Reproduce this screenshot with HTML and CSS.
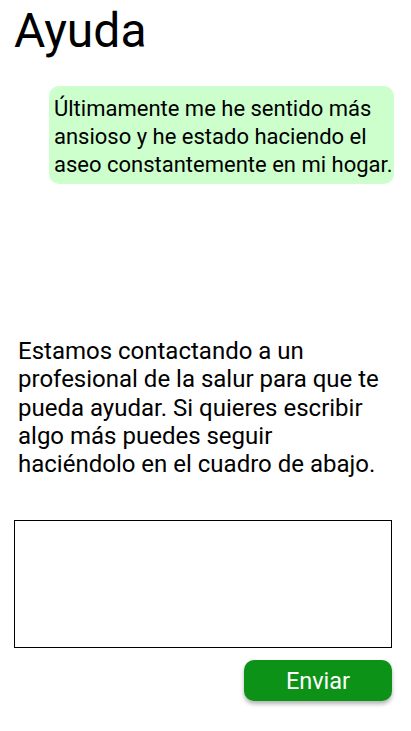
FILE: index.html
```html
<!DOCTYPE html>
<html lang="es">
<head>
<meta charset="utf-8">
<link rel="stylesheet" href="styles.css">
</head>
<body>
<div class="screen">
  <h1 class="title">Ayuda</h1>
  <div class="bubble-row">
    <div class="bubble">Últimamente me he sentido más ansioso y he estado haciendo el aseo constantemente en mi hogar.</div>
  </div>
  <p class="info">Estamos contactando a un profesional de la salur para que te pueda ayudar. Si quieres escribir algo más puedes seguir haciéndolo en el cuadro de abajo.</p>
  <textarea class="box"></textarea>
  <div class="actions">
    <button class="send">Enviar</button>
  </div>
</div>
</body>
</html>
```
FILE: styles.css
```css
* { box-sizing: border-box; }
html, body { margin: 0; padding: 0; background: #fff; }
body { font-family: Roboto, "Noto Sans", sans-serif; color: #000; }
.screen { width: 411px; height: 731px; padding: 0 19px 0 14px; display: flex; flex-direction: column; }
.title { font-size: 48px; font-weight: 400; margin: 3.3px 0 0 0; line-height: 56px; }
.bubble-row { display: flex; justify-content: flex-end; margin-top: 26.7px; margin-right: -2px; }
.bubble { width: 345px; background: #ccffcc; border-radius: 10px; padding: 9px 0 5px 5px; font-size: 22px; line-height: 28px; }
.info { margin: 153.2px 0 0 4px; font-size: 24px; line-height: 28.25px; }
.box { margin-top: 42px; width: 378px; height: 128px; border: 1.3px solid #000; resize: none; display: block; }
.actions { display: flex; justify-content: flex-end; margin-top: 12px; }
.send { width: 148px; height: 41px; background: #0c9317; color: #fff; border: none; border-radius: 10px; font-family: Roboto, sans-serif; font-size: 23.5px; box-shadow: 0 3px 4px rgba(0,0,0,0.3); }
```
